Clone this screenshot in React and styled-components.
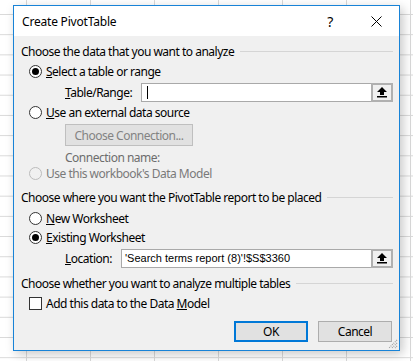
import React from 'react';
import styled, { createGlobalStyle } from 'styled-components';

const GlobalStyle = createGlobalStyle`
  html, body {
    margin: 0;
    padding: 0;
  }
  body {
    width: 413px;
    height: 361px;
    overflow: hidden;
    box-sizing: border-box;
    padding: 5px 0 0 13px;
    background-color: #fff;
    background-image:
      linear-gradient(to right, #d9d9d9 1px, transparent 1px),
      linear-gradient(to bottom, #d9d9d9 1px, transparent 1px);
    background-size: 64px 20.2px;
    background-position: 26px 14px;
    font-family: "Noto Sans", "Open Sans", sans-serif;
    font-size: 12px;
    letter-spacing: -0.5px;
    color: #000;
  }
`;

const Dialog = styled.div`
  position: relative;
  box-sizing: border-box;
  width: 387px;
  height: 346px;
  border: 1px solid #1883d7;
  background: #f0f0f0;
  box-shadow: 3px 3px 10px rgba(0, 0, 0, 0.22);
  display: flex;
  flex-direction: column;
`;

const TitleBar = styled.div`
  height: 30px;
  background: #fff;
  display: flex;
  align-items: center;
  padding-left: 8px;
`;

const Title = styled.div`
  flex: 1;
  letter-spacing: -0.2px;
`;

const TitleButton = styled.div`
  width: 46px;
  height: 30px;
  display: flex;
  align-items: center;
  justify-content: center;
  font-size: 14px;
`;

const Body = styled.div`
  padding: 5px 6px 0 7px;
  display: flex;
  flex-direction: column;
`;

const SectionHeader = styled.div`
  height: 20px;
  margin-top: ${p => p.$top || 0}px;
  display: flex;
  align-items: center;
  gap: 6px;
  white-space: nowrap;
`;

const Rule = styled.div`
  flex: 1;
  height: 1px;
  background: #d5d5d5;
`;

const OptionRow = styled.label`
  height: ${p => p.$h || 20}px;
  margin-top: ${p => p.$top || 0}px;
  padding-left: 8px;
  display: flex;
  align-items: center;
  gap: 4px;
  color: ${p => (p.$disabled ? '#7a7a7a' : '#000')};
  white-space: nowrap;
`;

const RadioCircle = styled.span`
  box-sizing: border-box;
  width: 13px;
  height: 13px;
  border-radius: 50%;
  border: 1px solid ${p => (p.$disabled ? '#bcbcbc' : '#333')};
  background: ${p => (p.$disabled ? '#f0f0f0' : '#fff')};
  display: flex;
  align-items: center;
  justify-content: center;

  &::after {
    content: '';
    width: 7px;
    height: 7px;
    border-radius: 50%;
    background: #000;
    display: ${p => (p.$checked ? 'block' : 'none')};
  }
`;

const CheckBox = styled.span`
  box-sizing: border-box;
  width: 13px;
  height: 13px;
  border: 1px solid #333;
  background: #fff;
`;

const FieldRow = styled.div`
  height: 22px;
  margin-top: ${p => p.$top || 0}px;
  padding-left: 44px;
  display: flex;
  align-items: center;
`;

const FieldLabel = styled.span`
  width: ${p => p.$w}px;
  flex-shrink: 0;
`;

const RefEdit = styled.div`
  flex: 1;
  box-sizing: border-box;
  height: 19px;
  border: 1px solid #a9a9a9;
  background: #fff;
  display: flex;
  align-items: center;
`;

const RefText = styled.span`
  flex: 1;
  padding-left: 3px;
  display: flex;
  align-items: center;
  white-space: nowrap;
  overflow: hidden;
  font-family: "Liberation Sans", Arial, sans-serif;
  font-size: 11px;
  letter-spacing: 0;
`;

const Caret = styled.span`
  width: 1px;
  height: 13px;
  margin-left: 2px;
  background: #000;
`;

const CollapseButton = styled.span`
  box-sizing: border-box;
  width: 22px;
  height: 19px;
  margin: -1px -1px -1px 0;
  border: 2px solid #b0b0b0;
  background: #f0f0f0;
  display: flex;
  align-items: center;
  justify-content: center;
`;

const IndentRow = styled.div`
  height: ${p => p.$h}px;
  margin-top: ${p => p.$top || 0}px;
  padding-left: 44px;
  display: flex;
  align-items: center;
  color: #6d6d6d;
`;

const DisabledButton = styled.div`
  box-sizing: border-box;
  width: 128px;
  height: 22px;
  border: 1px solid #bfbfbf;
  background: #e1e1e1;
  color: #838383;
  display: flex;
  align-items: center;
  justify-content: center;
`;

const ButtonRow = styled.div`
  margin-top: 8px;
  margin-right: 1px;
  display: flex;
  justify-content: flex-end;
  gap: 10px;
`;

const Button = styled.div`
  box-sizing: border-box;
  width: 74px;
  height: 21px;
  border: ${p => (p.$default ? '2px solid #0078d7' : '1px solid #adadad')};
  background: #e1e1e1;
  display: flex;
  align-items: center;
  justify-content: center;
`;

const Grip = styled.svg`
  position: absolute;
  right: 1px;
  bottom: 1px;
`;

function UpArrow() {
  return (
    <svg width="10" height="11" viewBox="0 0 10 11">
      <path d="M5 0 L10 5 L7 5 L7 8 L3 8 L3 5 L0 5 Z" fill="#000" />
      <rect x="0" y="9" width="10" height="1.5" fill="#000" />
    </svg>
  );
}

function Radio({ checked, disabled, children, ...rest }) {
  return (
    <OptionRow $disabled={disabled} {...rest}>
      <RadioCircle $checked={checked} $disabled={disabled} />
      <span>{children}</span>
    </OptionRow>
  );
}

export default function App() {
  return (
    <>
      <GlobalStyle />
      <Dialog>
        <TitleBar>
          <Title>Create PivotTable</Title>
          <TitleButton>?</TitleButton>
          <TitleButton>
            <svg width="11" height="11" viewBox="0 0 11 11">
              <path d="M0.5 0.5 L10.5 10.5 M10.5 0.5 L0.5 10.5" stroke="#000" strokeWidth="1" />
            </svg>
          </TitleButton>
        </TitleBar>
        <Body>
          <SectionHeader>
            Choose the data that you want to analyze
            <Rule />
          </SectionHeader>
          <Radio checked>
            <u>S</u>elect a table or range
          </Radio>
          <FieldRow>
            <FieldLabel $w={76}>
              <u>T</u>able/Range:
            </FieldLabel>
            <RefEdit>
              <RefText>
                <Caret />
              </RefText>
              <CollapseButton>
                <UpArrow />
              </CollapseButton>
            </RefEdit>
          </FieldRow>
          <Radio $h={18}>
            <u>U</u>se an external data source
          </Radio>
          <IndentRow $h={22} $top={3}>
            <DisabledButton>Choose Connection...</DisabledButton>
          </IndentRow>
          <IndentRow $h={18} $top={2}>
            Connection name:
          </IndentRow>
          <Radio disabled $h={14}>
            Use this workbook's Data Model
          </Radio>
          <SectionHeader $top={7}>
            Choose where you want the PivotTable report to be placed
            <Rule />
          </SectionHeader>
          <Radio $top={1}>
            <u>N</u>ew Worksheet
          </Radio>
          <Radio checked $h={18}>
            <u>E</u>xisting Worksheet
          </Radio>
          <FieldRow $top={1}>
            <FieldLabel $w={56}>
              <u>L</u>ocation:
            </FieldLabel>
            <RefEdit>
              <RefText>'Search terms report (8)'!$S$3360</RefText>
              <CollapseButton>
                <UpArrow />
              </CollapseButton>
            </RefEdit>
          </FieldRow>
          <SectionHeader $top={4}>
            Choose whether you want to analyze multiple tables
            <Rule />
          </SectionHeader>
          <OptionRow>
            <CheckBox />
            <span>
              Add this data to the Data <u>M</u>odel
            </span>
          </OptionRow>
          <ButtonRow>
            <Button $default>OK</Button>
            <Button>Cancel</Button>
          </ButtonRow>
        </Body>
        <Grip width="11" height="11" viewBox="0 0 11 11">
          <path d="M10 2 L2 10 M10 5 L5 10 M10 8 L8 10" stroke="#a0a0a0" strokeWidth="1.2" strokeDasharray="1 1" />
        </Grip>
      </Dialog>
    </>
  );
}
